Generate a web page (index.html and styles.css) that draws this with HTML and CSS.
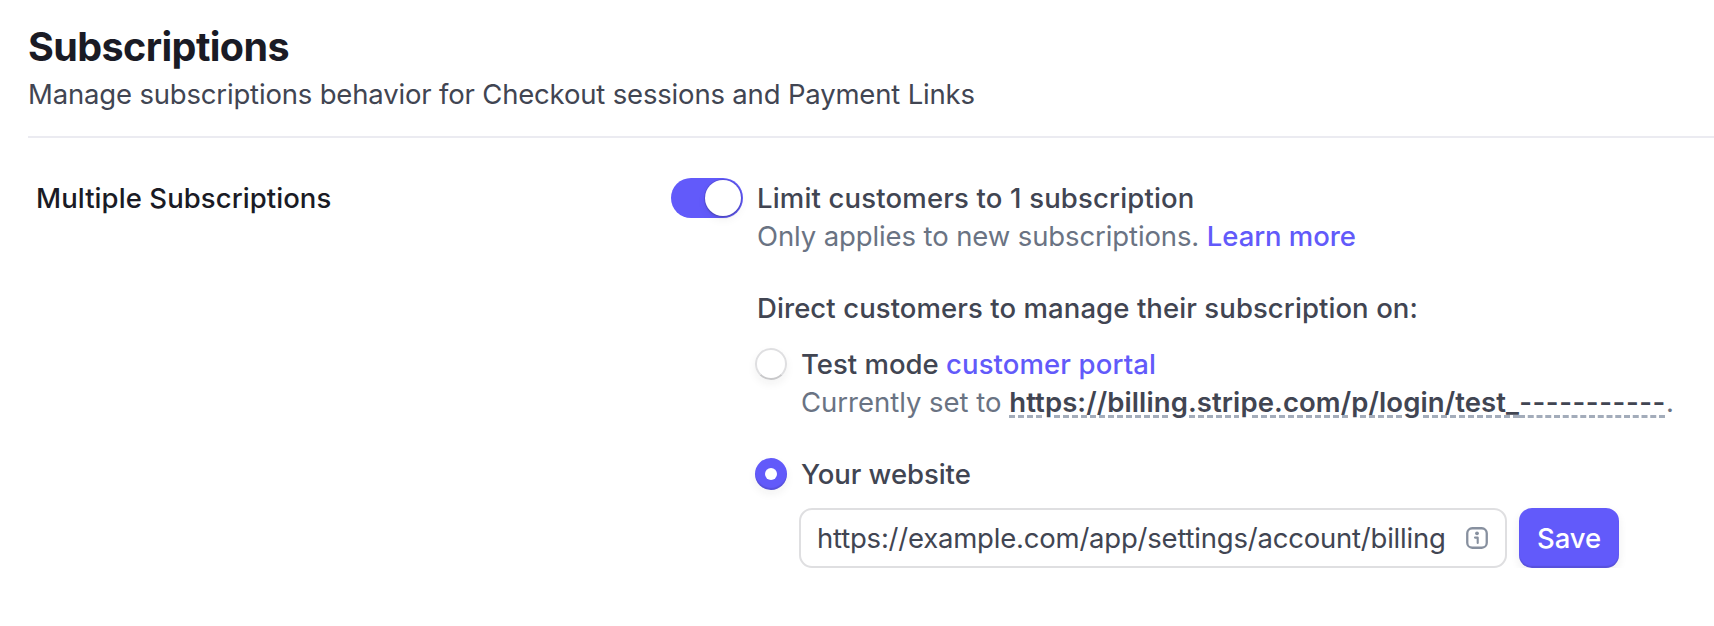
FILE: index.html
```html
<!DOCTYPE html>
<html lang="en">
<head>
<meta charset="utf-8">
<title>Subscriptions</title>
<link rel="stylesheet" href="styles.css">
</head>
<body>
<main class="page">
  <header class="header">
    <h1 class="title">Subscriptions</h1>
    <p class="subtitle">Manage subscriptions behavior for Checkout sessions and Payment Links</p>
  </header>
  <section class="setting">
    <h2 class="setting-name">Multiple Subscriptions</h2>
    <div class="control">
      <span class="toggle" role="switch" aria-checked="true"><span class="knob"></span></span>
      <div class="details">
        <p class="label limit">Limit customers to 1 subscription</p>
        <p class="hint applies">Only applies to new subscriptions. <a class="link learn">Learn more</a></p>
        <p class="label direct">Direct customers to manage their subscription on:</p>
        <div class="option">
          <span class="radio"></span>
          <div class="option-body">
            <p class="label">Test mode <a class="link portal">customer portal</a></p>
            <p class="hint current">Currently set to <span class="url">https://billing.stripe.com/p/login/test_<span class="dashes">-----------</span></span>.</p>
          </div>
        </div>
        <div class="option website">
          <span class="radio checked"></span>
          <div class="option-body">
            <p class="label your">Your website</p>
            <div class="form">
              <div class="field">
                <span class="value">https://example.com/app/settings/account/billing</span>
                <svg class="info" viewBox="0 0 22 22" fill="none">
                  <rect x="1.25" y="1.25" width="19.5" height="19.5" rx="5" stroke="#87909f" stroke-width="2.3"/>
                  <circle cx="11" cy="6.3" r="1.9" fill="#87909f"/>
                  <path d="M9 10.6h2.7v5.3" stroke="#87909f" stroke-width="2.1" stroke-linecap="round" stroke-linejoin="round"/>
                </svg>
              </div>
              <button class="save">Save</button>
            </div>
          </div>
        </div>
      </div>
    </div>
  </section>
</main>
</body>
</html>
```
FILE: styles.css
```css
* { box-sizing: border-box; }
body {
  margin: 0;
  background: #fff;
  color: #414552;
  font: 400 27.5px/38px Inter, "Noto Sans", sans-serif;
  overflow: hidden;
}
h1, h2, p { margin: 0; white-space: nowrap; }
.page { padding: 23px 0 0 28px; }
.header { padding-bottom: 23px; border-bottom: 2px solid #ebebf1; }
.title {
  margin-bottom: 4px;
  color: #1a1b25;
  font-size: 39.5px;
  font-weight: 700;
  line-height: 48px;
  letter-spacing: -0.6px;
}
.subtitle { letter-spacing: -0.175px; }
.setting {
  display: grid;
  grid-template-columns: 635px 1fr;
  padding: 40px 0 0 8px;
}
.setting-name {
  padding-top: 1px;
  color: #1a1b25;
  font-size: inherit;
  font-weight: 500;
  letter-spacing: 0.07px;
}
.control { display: flex; align-items: flex-start; gap: 14px; }
.toggle {
  display: flex;
  justify-content: flex-end;
  flex: none;
  width: 72px;
  height: 40px;
  padding: 2px;
  border-radius: 20px;
  background: #625afa;
}
.knob {
  width: 36px;
  height: 36px;
  border-radius: 50%;
  background: #fff;
  box-shadow: 0 0 0 1px rgba(26, 27, 37, .12), 0 2px 2px rgba(26, 27, 37, .14), 0 4px 10px rgba(26, 27, 37, .05);
}
.details { padding-top: 1px; }
.label { font-weight: 500; }
.hint { color: #6a7383; }
.link { color: #625afa; font-weight: 500; }
.limit { letter-spacing: 0.17px; }
.applies { letter-spacing: -0.11px; }
.learn { letter-spacing: -0.066px; }
.direct { margin: 34px 0 18px; letter-spacing: 0.083px; }
.option { display: flex; align-items: flex-start; gap: 14px; margin-left: -2px; }
.website { margin-top: 34px; }
.radio {
  flex: none;
  width: 32px;
  height: 32px;
  margin-top: 3px;
  border: 2px solid #dfdfe1;
  border-bottom-color: #c8c8ca;
  border-radius: 50%;
  box-shadow: 0 4px 10px rgba(26, 27, 37, .06);
}
.checked {
  display: grid;
  place-items: center;
  border: 0;
  background: #625afa;
  box-shadow: inset 0 -2px 1px rgba(26, 27, 37, .15), 0 4px 10px rgba(26, 27, 37, .06);
}
.checked::after {
  content: "";
  width: 12px;
  height: 12px;
  border-radius: 50%;
  background: #fff;
}
.portal { letter-spacing: 0.122px; }
.current { letter-spacing: -0.02px; }
.url {
  color: #414552;
  font-weight: 600;
  letter-spacing: 0.1px;
  text-decoration: underline dashed 3px #a3acba;
  text-underline-offset: 3px;
}
.dashes { letter-spacing: 0.55px; }
.your { letter-spacing: -0.05px; }
.form { display: flex; gap: 12px; margin: 15px 0 0 -2px; }
.field {
  display: flex;
  align-items: center;
  justify-content: space-between;
  width: 708px;
  height: 60px;
  padding: 0 17px 0 16px;
  border: 2px solid #dfdfe1;
  border-radius: 13px;
}
.value { letter-spacing: -0.21px; }
.info { width: 22px; height: 22px; }
.save {
  width: 100px;
  height: 60px;
  padding: 0;
  border: 0;
  border-radius: 13px;
  background: #625afa;
  color: #fff;
  font: inherit;
  font-weight: 500;
  letter-spacing: -0.15px;
  box-shadow: inset 0 -2px 1px rgba(26, 27, 37, .14), 0 4px 10px rgba(26, 27, 37, .07);
}
```
